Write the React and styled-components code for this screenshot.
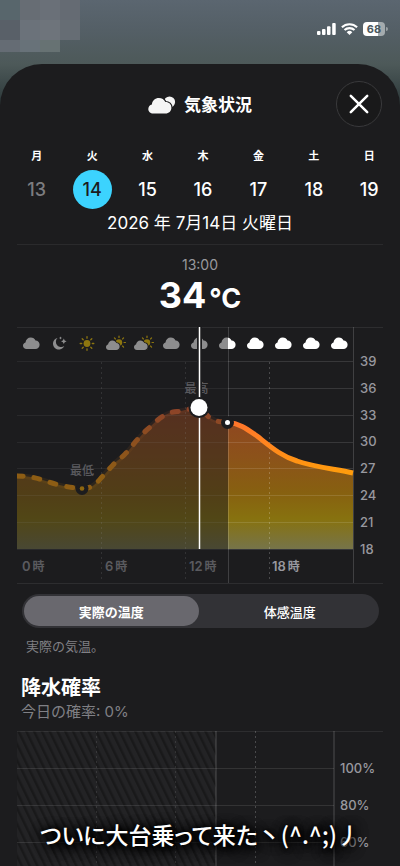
import React, { useState } from 'react';
import styled, { createGlobalStyle } from 'styled-components';

const FONT = "Inter, 'Noto Sans CJK JP', sans-serif";
const SHEET = '#1c1c1e';

const GlobalStyle = createGlobalStyle`
  * {
    box-sizing: border-box;
  }
  body {
    margin: 0;
    background: ${SHEET};
    color: #fff;
    font-family: ${FONT};
  }
  button {
    border: 0;
    padding: 0;
    background: none;
    color: inherit;
    font-family: inherit;
    cursor: pointer;
  }
`;

const StyledScreen = styled.div`
  position: relative;
  display: flex;
  flex-direction: column;
  height: 100vh;
  overflow: hidden;
  background: linear-gradient(180deg, #5b6670 0, #545f66 30px, #4d5959 64px, #1f2b2d 120px);
`;

const StyledTop = styled.div`
  display: flex;
  justify-content: space-between;
  align-items: flex-start;
  flex-shrink: 0;
  height: 64px;
`;

const StyledMosaic = styled.div`
  display: grid;
  grid-template-columns: repeat(4, 20px);
  grid-template-rows: 20px 20px 12px;
`;

const StyledTile = styled.span`
  background: ${({ $color }) => $color};
`;

const StyledStatus = styled.div`
  display: flex;
  align-items: center;
  gap: 5px;
  padding: 22px 12px 0 0;
`;

const StyledBattery = styled.div`
  display: flex;
  align-items: center;
  gap: 1px;
  &::after {
    content: '';
    width: 2px;
    height: 4px;
    border-radius: 0 2px 2px 0;
    background: #9aa1a4;
  }
`;

const StyledLevel = styled.span`
  width: 22px;
  height: 14px;
  border-radius: 4px;
  background: linear-gradient(90deg, #fff 68%, #a4abae 68%);
  color: #4c585e;
  font-size: 11px;
  font-weight: 700;
  line-height: 14px;
  text-align: center;
`;

const StyledSheet = styled.main`
  flex: 1;
  min-height: 0;
  padding-top: 17px;
  border-radius: 42px 42px 0 0;
  background: ${SHEET};
  overflow: hidden;
`;

const StyledHeader = styled.header`
  display: grid;
  grid-template-columns: 46px 1fr 46px;
  align-items: center;
  padding: 0 18px;
`;

const StyledTitle = styled.h1`
  grid-column: 2;
  display: flex;
  justify-content: center;
  align-items: center;
  gap: 8px;
  margin: 0;
  padding-top: 2px;
  font-size: 17px;
  font-weight: 700;
  line-height: 24px;
`;

const StyledClose = styled.button`
  display: flex;
  justify-content: center;
  align-items: center;
  width: 46px;
  height: 46px;
  border: 1px solid #3a3a3c;
  border-radius: 50%;
  background: #19191a;
`;

const StyledWeek = styled.div`
  display: grid;
  grid-template-columns: repeat(7, 1fr);
  padding: 21px 3px 0 9px;
`;

const StyledDay = styled.button`
  display: flex;
  flex-direction: column;
  align-items: center;
  gap: 6px;
`;

const StyledWeekday = styled.span`
  font-size: 11px;
  font-weight: 700;
  line-height: 16px;
`;

const StyledDate = styled.span`
  width: 39px;
  height: 39px;
  border-radius: 50%;
  font-size: 18px;
  font-weight: 500;
  line-height: 39px;
  color: ${({ $past, $selected }) => {
    if ($selected) return SHEET;
    return $past ? '#7c7c80' : '#fff';
  }};
  background: ${({ $selected }) => ($selected ? '#3cd3fe' : 'transparent')};
`;

const StyledFullDate = styled.p`
  margin: 2px 0 9px;
  font-size: 17px;
  line-height: 24px;
  text-align: center;
`;

const StyledSection = styled.section`
  margin: 0 17px;
`;

const StyledReading = styled.div`
  padding: 12px 0 14px;
  border-top: 1px solid #2a2a2c;
  text-align: center;
`;

const StyledTime = styled.div`
  color: #98989d;
  font-size: 14px;
  line-height: 16px;
`;

const StyledTemperature = styled.div`
  display: flex;
  justify-content: center;
  align-items: baseline;
  gap: 3px;
  height: 36px;
  margin-top: 4px;
  font-size: 36px;
  font-weight: 700;
  line-height: 36px;
`;

const StyledUnit = styled.span`
  font-size: 27px;
`;

const StyledChart = styled.svg`
  display: block;
  width: 100%;
  height: auto;
  font-family: ${FONT};
  font-size: 13px;
  font-weight: 500;
`;

const StyledSegments = styled.div`
  display: grid;
  grid-template-columns: 1fr 1fr;
  gap: 4px;
  margin: 10px 4px 0 5px;
  padding: 2px;
  border-radius: 17px;
  background: #323236;
`;

const StyledSegment = styled.button`
  height: 30px;
  border-radius: 15px;
  font-size: 13px;
  font-weight: ${({ $active }) => ($active ? 700 : 500)};
  background: ${({ $active }) => ($active ? '#69686e' : 'transparent')};
`;

const StyledNote = styled.p`
  margin: 8px 9px 0;
  color: #808085;
  font-size: 13px;
  line-height: 20px;
`;

const StyledHeading = styled.h2`
  margin: 18px 4px 0;
  font-size: 20px;
  font-weight: 700;
  line-height: 28px;
`;

const StyledSubheading = styled.p`
  margin: 0 4px 9px;
  color: #808085;
  font-size: 15px;
  line-height: 20px;
`;

const StyledCaption = styled.p`
  position: absolute;
  right: 0;
  bottom: 16px;
  left: 0;
  margin: 0;
  font-family: 'Noto Sans CJK JP', sans-serif;
  font-size: 23px;
  font-weight: 500;
  font-feature-settings: 'palt';
  line-height: 32px;
  text-align: center;
  white-space: nowrap;
  text-shadow: 0 0 4px #000, 0 0 8px #000, 2px 3px 10px #000, 2px 3px 14px #000, 2px 3px 14px #000;
`;

const tiles = [
  '#58666c', '#676d74', '#6a7078', '#656b73',
  '#596068', '#6b727a', '#6e747b', '#666d74',
  '#656c74', '#687279', '#677273', 'transparent',
];

const days = [
  { weekday: '月', date: 13 },
  { weekday: '火', date: 14 },
  { weekday: '水', date: 15 },
  { weekday: '木', date: 16 },
  { weekday: '金', date: 17 },
  { weekday: '土', date: 18 },
  { weekday: '日', date: 19 },
];

const CLOUD = 'M3.6 11.5C1.5 11.5 0 10.1 0 8.2 0 6.6 1 5.4 2.5 5 2.8 2.1 4.9 0 7.8 0c2.2 0 3.9 1.2 4.7 3.1 2.4 0 4.1 1.8 4.1 4.1 0 2.5-1.8 4.3-4.2 4.3Z';
const PAST_CURVE = 'M0 149C12 149 20 151 29 154 40 158 54 161 65 161.500C74 162 79 157 84 151 89 146 92 142 96 138 101 132 105 131 109 126 114 122 116 117 120 113 125 108 128 104 132 101 140 93 149 85 160 84.500C168 84 176 80 182 81 188 83 189 92 202 94.500L211 95.500';
const NEXT_CURVE = 'C222 96 230 102 240 109 254 120 264 129 280 134 297 140 318 142 336 146';

const sky = ['cloud', 'moon', 'sun', 'partly', 'partly', 'cloud', 'cloud', 'cloud', 'cloud', 'cloud', 'cloud', 'cloud'];

const hours = [
  { value: 0, x: 5 },
  { value: 6, x: 88 },
  { value: 12, x: 172 },
  { value: 18, x: 255 },
];

const Sun = ({ x, y, scale = 1 }) => (
  <g transform={`translate(${x} ${y}) scale(${scale})`} fill="#ffd000" stroke="#ffd000">
    <circle r="3.4" stroke="none" />
    {[0, 45, 90, 135, 180, 225, 270, 315].map((angle) => (
      <path key={angle} d="M0-5.300V-6.800" strokeWidth="1.300" strokeLinecap="round" transform={`rotate(${angle})`} />
    ))}
  </g>
);

const SkyIcon = ({ type, x }) => {
  if (type === 'sun') return <Sun x={x} y={16.5} />;
  if (type === 'moon') {
    return (
      <g transform={`translate(${x} 16.500)`} fill="#fff">
        <path d="M-1.500-5.600A5.900 5.900 0 1 0 5.300 2.500 5.300 5.300 0 0 1-1.500-5.600Z" />
        <path d="M4.800-5Q5.200-2.600 7.600-2.200 5.200-1.800 4.800.6 4.400-1.800 2-2.200 4.400-2.600 4.800-5Z" />
        <path d="M1.500-7Q1.800-5.700 3-5.400 1.800-5.100 1.500-3.900 1.200-5.100 0-5.400 1.200-5.700 1.500-7Z" />
      </g>
    );
  }
  if (type === 'partly') {
    return (
      <g>
        <Sun x={x + 4} y={15.5} scale={0.95} />
        <path
          d={CLOUD}
          fill="#fff"
          stroke={SHEET}
          strokeWidth="2"
          paintOrder="stroke"
          transform={`translate(${x - 9} 13.500) scale(.82)`}
        />
      </g>
    );
  }
  return <path d={CLOUD} fill="#fff" transform={`translate(${x - 8} 10.500)`} />;
};

const TemperatureChart = () => (
  <StyledChart viewBox="0 0 366 257" role="img" aria-label="気温">
    <defs>
      <linearGradient id="area" gradientUnits="userSpaceOnUse" x1="0" y1="80" x2="0" y2="222">
        <stop offset="0" stopColor="#904322" />
        <stop offset=".35" stopColor="#8c521a" />
        <stop offset=".6" stopColor="#876010" />
        <stop offset=".79" stopColor="#87720f" />
        <stop offset="1" stopColor="#76744a" />
      </linearGradient>
      <linearGradient id="line" gradientUnits="userSpaceOnUse" x1="0" y1="80" x2="0" y2="150">
        <stop offset="0" stopColor="#ff6a34" />
        <stop offset=".5" stopColor="#ff8420" />
        <stop offset="1" stopColor="#ff9f0a" />
      </linearGradient>
    </defs>

    <path d={`${PAST_CURVE}${NEXT_CURVE}V222H0Z`} fill="url(#area)" />
    <g stroke="#fff" strokeOpacity=".12">
      <path d="M0 .5H366M0 256.500H366" strokeOpacity=".08" />
      {[34.5, 61.5, 88.5, 115.5, 141.5, 168.5, 195.5, 222.5].map((y) => (
        <path key={y} d={`M0 ${y}H336`} />
      ))}
      {[84.5, 168.5, 252.5].map((x) => (
        <path key={x} d={`M${x} 35V252`} strokeDasharray="2 3" strokeOpacity=".2" />
      ))}
      <path d="M336.500 0V256" strokeOpacity=".16" />
    </g>
    {sky.map((type, i) => (
      <SkyIcon key={i} type={type} x={14 + i * 28} />
    ))}
    <path d={PAST_CURVE} fill="none" stroke="url(#line)" strokeWidth="5" strokeOpacity=".15" />
    <path d={PAST_CURVE} fill="none" stroke="url(#line)" strokeWidth="5" strokeLinecap="round" strokeDasharray="6 11" />
    <circle cx="65" cy="161.500" r="6.500" fill={SHEET} />
    <circle cx="65" cy="161.500" r="2.300" fill="#ffb000" />
    <g fill="#98989f">
      <text x="65" y="147.500" fontSize="12" textAnchor="middle">最低</text>
      <text x="179.500" y="65.500" fontSize="12" textAnchor="middle">最高</text>
      {hours.map(({ value, x }) => (
        <text key={value} x={x} y="244" fontWeight="600">
          {value}
          <tspan dx="2" fontSize="12">時</tspan>
        </text>
      ))}
    </g>

    {/* hours already gone by are dimmed */}
    <path d="M0 1H211V256H0Z" fill={SHEET} fillOpacity=".5" />
    <path d="M211.500 0V256" stroke="#fff" strokeOpacity=".16" />
    <path d={`M211 95.500${NEXT_CURVE}`} fill="none" stroke="url(#line)" strokeWidth="5" />
    <circle cx="210.500" cy="95.500" r="6.500" fill={SHEET} />
    <circle cx="210.500" cy="95.500" r="2.500" fill="#fff" />

    <path d="M182.500 0V80" stroke={SHEET} strokeWidth="5" />
    <path d="M182.500 0V222" stroke="#fff" strokeWidth="1.500" />
    <circle cx="182" cy="80.500" r="10.500" fill={SHEET} />
    <circle cx="182" cy="80.500" r="8.500" fill="#fff" />

    <g fill="#98989f">
      {[39, 36, 33, 30, 27, 24, 21, 18].map((value, i) => (
        <text key={value} x="343" y={39 + Math.round(i * 26.8)}>{value}</text>
      ))}
    </g>
  </StyledChart>
);

const RainChart = () => (
  <StyledChart viewBox="0 0 366 150" role="img" aria-label="降水確率">
    <defs>
      <pattern id="hatch" width="7" height="7" patternUnits="userSpaceOnUse" patternTransform="rotate(-26)">
        <rect width="7" height="7" fill="#232325" />
        <rect width="2.500" height="7" fill="#19191a" />
      </pattern>
    </defs>
    <path d="M0 0H199V150H0Z" fill="url(#hatch)" />
    <g stroke="#fff" strokeOpacity=".1">
      <path d="M0 .5H366" strokeOpacity=".08" />
      {[37.5, 74.5, 111.5, 148.5].map((y) => (
        <path key={y} d={`M0 ${y}H317`} />
      ))}
      {[79.5, 158.5, 238.5].map((x) => (
        <path key={x} d={`M${x} 0V150`} strokeDasharray="2 3" strokeOpacity={x > 199 ? 0.2 : 0.1} />
      ))}
      <path d="M199 0V150M317 0V150" strokeWidth="1.500" strokeOpacity=".15" />
    </g>
    <g fill="#98989f">
      {[100, 80, 60].map((value, i) => (
        <text key={value} x="323" y={42 + i * 37}>{`${value}%`}</text>
      ))}
    </g>
  </StyledChart>
);

const StatusBar = () => (
  <StyledStatus>
    <svg width="19" height="12" viewBox="0 0 19 12" fill="#fff" aria-hidden="true">
      <rect x="0" y="8" width="3.500" height="4" rx="1" />
      <rect x="5" y="6" width="3.500" height="6" rx="1" />
      <rect x="10" y="3.300" width="3.500" height="8.700" rx="1" />
      <rect x="15.200" y="0" width="3.500" height="12" rx="1" />
    </svg>
    <svg width="17" height="12" viewBox="0 0 17 12" aria-hidden="true">
      <g fill="none" stroke="#fff" strokeWidth="2.100">
        <path d="M.9 4.300A10.900 10.900 0 0 1 16.100 4.300" />
        <path d="M3.500 7.100A7.200 7.200 0 0 1 13.500 7.100" />
      </g>
      <path d="M8.500 12 5.700 9.200A4 4 0 0 1 11.300 9.200Z" fill="#fff" />
    </svg>
    <StyledBattery>
      <StyledLevel>68</StyledLevel>
    </StyledBattery>
  </StyledStatus>
);

const App = () => {
  const [selected, setSelected] = useState(14);
  const [mode, setMode] = useState('actual');

  return (
    <StyledScreen>
      <GlobalStyle />
      <StyledTop>
        <StyledMosaic>
          {tiles.map((color, i) => (
            <StyledTile key={i} $color={color} />
          ))}
        </StyledMosaic>
        <StatusBar />
      </StyledTop>

      <StyledSheet>
        <StyledHeader>
          <StyledTitle>
            <svg width="28" height="18" viewBox="0 0 28 18" fill="#f5f5f5" aria-hidden="true">
              <circle cx="21.500" cy="6" r="5.600" />
              <path
                d="M5.300 17.500C2.300 17.500.3 15.500.3 12.900.3 10.600 1.800 8.900 3.900 8.400 4.300 4.500 7.200 2 10.900 2c3 0 5.300 1.600 6.500 4.100 3.500-.1 6 2.300 6 5.600 0 3.400-2.600 5.800-5.900 5.800Z"
                stroke={SHEET}
                strokeWidth="2.400"
                paintOrder="stroke"
              />
            </svg>
            気象状況
          </StyledTitle>
          <StyledClose type="button" aria-label="閉じる">
            <svg width="20" height="20" viewBox="0 0 20 20" aria-hidden="true">
              <path d="M1.800 1.800 18.200 18.200M18.200 1.800 1.800 18.200" stroke="#fff" strokeWidth="2.500" strokeLinecap="round" />
            </svg>
          </StyledClose>
        </StyledHeader>

        <StyledWeek>
          {days.map(({ weekday, date }) => (
            <StyledDay key={date} type="button" onClick={() => setSelected(date)}>
              <StyledWeekday>{weekday}</StyledWeekday>
              <StyledDate $past={date < 14} $selected={date === selected}>{date}</StyledDate>
            </StyledDay>
          ))}
        </StyledWeek>
        <StyledFullDate>2026 年 7月14日 火曜日</StyledFullDate>

        <StyledSection>
          <StyledReading>
            <StyledTime>13:00</StyledTime>
            <StyledTemperature>
              34
              <StyledUnit>°C</StyledUnit>
            </StyledTemperature>
          </StyledReading>
          <TemperatureChart />
          <StyledSegments>
            <StyledSegment
              type="button"
              aria-pressed={mode === 'actual'}
              $active={mode === 'actual'}
              onClick={() => setMode('actual')}
            >
              実際の温度
            </StyledSegment>
            <StyledSegment
              type="button"
              aria-pressed={mode === 'feels'}
              $active={mode === 'feels'}
              onClick={() => setMode('feels')}
            >
              体感温度
            </StyledSegment>
          </StyledSegments>
          <StyledNote>実際の気温。</StyledNote>
        </StyledSection>

        <StyledSection>
          <StyledHeading>降水確率</StyledHeading>
          <StyledSubheading>今日の確率: 0%</StyledSubheading>
          <RainChart />
        </StyledSection>
      </StyledSheet>

      <StyledCaption>ついに大台乗って来た丶(^.^;)丿</StyledCaption>
    </StyledScreen>
  );
};

export default App;
